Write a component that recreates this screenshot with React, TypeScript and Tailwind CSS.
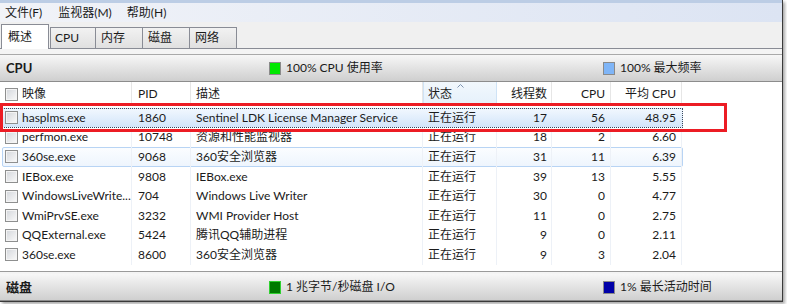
import React from "react";

type Row = {
  img: string;
  pid: string;
  desc: string;
  st: string;
  th: string;
  cpu: string;
  avg: string;
  sel?: boolean;
  hover?: boolean;
};

const rows: Row[] = [
  { img: "hasplms.exe", pid: "1860", desc: "Sentinel LDK License Manager Service", st: "正在运行", th: "17", cpu: "56", avg: "48.95", sel: true },
  { img: "perfmon.exe", pid: "10748", desc: "资源和性能监视器", st: "正在运行", th: "18", cpu: "2", avg: "6.60" },
  { img: "360se.exe", pid: "9068", desc: "360安全浏览器", st: "正在运行", th: "31", cpu: "11", avg: "6.39", hover: true },
  { img: "IEBox.exe", pid: "9808", desc: "IEBox.exe", st: "正在运行", th: "39", cpu: "13", avg: "5.55" },
  { img: "WindowsLiveWrite...", pid: "704", desc: "Windows Live Writer", st: "正在运行", th: "30", cpu: "0", avg: "4.77" },
  { img: "WmiPrvSE.exe", pid: "3232", desc: "WMI Provider Host", st: "正在运行", th: "11", cpu: "0", avg: "2.75" },
  { img: "QQExternal.exe", pid: "5424", desc: "腾讯QQ辅助进程", st: "正在运行", th: "9", cpu: "0", avg: "2.11" },
  { img: "360se.exe", pid: "8600", desc: "360安全浏览器", st: "正在运行", th: "9", cpu: "3", avg: "2.04" },
];

function Check() {
  return (
    <span className="block h-[13px] w-[13px] shrink-0 border border-[#8e8f8f] bg-linear-to-br from-[#d3d6db] to-[#fafafa] shadow-[inset_0_0_0_1px_#f4f4f4]" />
  );
}

function Swatch({ cls }: { cls: string }) {
  return <span className={"block h-[13px] w-[12px] border border-[#8a8a8a] " + cls} />;
}

function SectionHeader({ title, a, b, aCls, bCls }: { title: string; a: string; b: string; aCls: string; bCls: string }) {
  return (
    <div className="flex h-[27px] shrink-0 items-center border-b border-[#8c8c8c] bg-linear-to-b from-[#f7f7f7] to-[#cfcfcf]">
      <div className="w-[263px] pl-[6px] text-[13px] font-bold">{title}</div>
      <div className="flex w-[334px] items-center gap-[5px] pl-[6px]">
        <Swatch cls={aCls} />
        <span>{a}</span>
      </div>
      <div className="flex items-center gap-[5px] pl-[6px]">
        <Swatch cls={bCls} />
        <span>{b}</span>
      </div>
    </div>
  );
}

const bd = (sel?: boolean) => (sel ? "border-transparent" : "border-[#edf1f7]");

export default function App() {
  return (
    <div className="relative h-[304px] w-[787px] overflow-hidden bg-white font-['Lato','Noto_Sans_CJK_SC',sans-serif] text-[12px] leading-none text-[#1b1b1b]">
      <div className="flex h-[302px] w-[783px] flex-col border-r border-b border-[#3a3a3a] bg-[#f0f0f0] shadow-[2px_2px_3px_rgba(0,0,0,0.35)]">
        {/* frame top */}
        <div className="h-[3px] shrink-0 bg-[#bccde5]" />
        {/* menu bar */}
        <div className="flex h-[19px] shrink-0 items-center bg-linear-to-r from-[#f1f3f8] to-[#dce4f3]">
          <span className="ml-[5px]">文件(F)</span>
          <span className="ml-[16px]">监视器(M)</span>
          <span className="ml-[15px]">帮助(H)</span>
        </div>
        {/* tabs */}
        <div className="flex h-[27px] shrink-0 items-end border-b border-[#898c95] pl-[1px]">
          <div className="-mb-px flex h-[25px] w-[48px] items-center border border-b-0 border-[#898c95] bg-white pl-[6px]">概述</div>
          <div className="ml-[1px] flex h-[21px] w-[46px] items-center border border-b-0 border-[#898c95] bg-linear-to-b from-[#f2f2f2] to-[#e0e0e0] pl-[4px]">CPU</div>
          <div className="flex h-[21px] w-[47px] items-center border border-b-0 border-l-0 border-[#898c95] bg-linear-to-b from-[#f2f2f2] to-[#e0e0e0] pl-[5px]">内存</div>
          <div className="flex h-[21px] w-[47px] items-center border border-b-0 border-l-0 border-[#898c95] bg-linear-to-b from-[#f2f2f2] to-[#e0e0e0] pl-[5px]">磁盘</div>
          <div className="flex h-[21px] w-[47px] items-center border border-b-0 border-l-0 border-[#898c95] bg-linear-to-b from-[#f2f2f2] to-[#e0e0e0] pl-[5px]">网络</div>
        </div>
        {/* gap lines */}
        <div className="h-[6px] shrink-0 border-b border-[#a9a9a9] bg-[#f4f4f4]" />
        <SectionHeader
          title="CPU"
          a="100% CPU 使用率"
          b="100% 最大频率"
          aCls="bg-[#00e800]"
          bCls="bg-[#7fb5f7]"
        />
        {/* list */}
        <div className="h-[183px] shrink-0 bg-white">
          <div className="flex h-[24px] items-center">
            <div className="flex h-full w-[132px] items-center border-r border-[#e6e6e6] pl-[5px]">
              <Check />
              <span className="ml-[4px]">映像</span>
            </div>
            <div className="flex h-full w-[59px] items-center border-r border-[#e6e6e6] pl-[6px]">PID</div>
            <div className="flex h-full w-[232px] items-center border-r border-[#e6e6e6] pl-[5px]">描述</div>
            <div className="relative flex h-full w-[74px] items-center border-x border-[#cfe3f6] bg-linear-to-b from-[#f2f8fd] to-[#e4f0fb] pl-[4px]">
              <svg className="absolute left-[33px] top-[2px]" width="7" height="4" viewBox="0 0 7 4">
                <path d="M0.5 3.5 L3.5 0.5 L6.5 3.5" fill="none" stroke="#7d93b0" strokeWidth="1" />
              </svg>
              状态
            </div>
            <div className="flex h-full w-[55px] items-center justify-end border-r border-[#e6e6e6] pr-[4px]">线程数</div>
            <div className="flex h-full w-[59px] items-center justify-end border-r border-[#e6e6e6] pr-[5px]">CPU</div>
            <div className="flex h-full w-[71px] items-center justify-end border-r border-[#e6e6e6] pr-[5px]">平均 CPU</div>
          </div>
          <div className="pt-[2px]">
            {rows.map((r, i) => (
              <div key={i} className="relative flex h-[19.6px] items-center">
                {r.sel && (
                  <div className="absolute bottom-0 left-[2px] top-0 w-[681px] border border-dotted border-[#3c4a5e] bg-linear-to-b from-[#f1f7fe] to-[#d2e5fa]" />
                )}
                {r.hover && (
                  <div className="absolute bottom-0 left-[2px] top-0 w-[681px] rounded-[2px] border border-[#b8d4f4] bg-linear-to-b from-[#fbfdff] to-[#eef5fd]" />
                )}
                <div className={"relative flex h-full w-[132px] items-center border-r pl-[5px] " + bd(r.sel)}>
                  <Check />
                  <span className="ml-[4px] whitespace-nowrap">{r.img}</span>
                </div>
                <div className={"relative flex h-full w-[59px] items-center border-r pl-[6px] " + bd(r.sel)}>{r.pid}</div>
                <div className={"relative flex h-full w-[232px] items-center whitespace-nowrap border-r pl-[5px] " + bd(r.sel)}>{r.desc}</div>
                <div className={"relative flex h-full w-[74px] items-center border-r pl-[5px] " + bd(r.sel)}>{r.st}</div>
                <div className={"relative flex h-full w-[55px] items-center justify-end border-r pr-[4px] " + bd(r.sel)}>{r.th}</div>
                <div className={"relative flex h-full w-[59px] items-center justify-end border-r pr-[5px] " + bd(r.sel)}>{r.cpu}</div>
                <div className={"relative flex h-full w-[71px] items-center justify-end border-r pr-[5px] " + bd(r.sel)}>{r.avg}</div>
              </div>
            ))}
          </div>
        </div>
        <div className="h-[6px] shrink-0 bg-white" />
        <div className="h-[1px] shrink-0 bg-[#9a9a9a]" />
        <div className="h-[2px] shrink-0 bg-[#f4f4f4]" />
        <SectionHeader
          title="磁盘"
          a="1 兆字节/秒磁盘 I/O"
          b="1% 最长活动时间"
          aCls="bg-[#007a00] border-[#30d030]"
          bCls="bg-[#0000a8]"
        />
      </div>
      {/* red annotation */}
      <div className="absolute left-[0px] top-[103px] h-[29px] w-[727px] border-[3px] border-[#ec1c24]" />
    </div>
  );
}
